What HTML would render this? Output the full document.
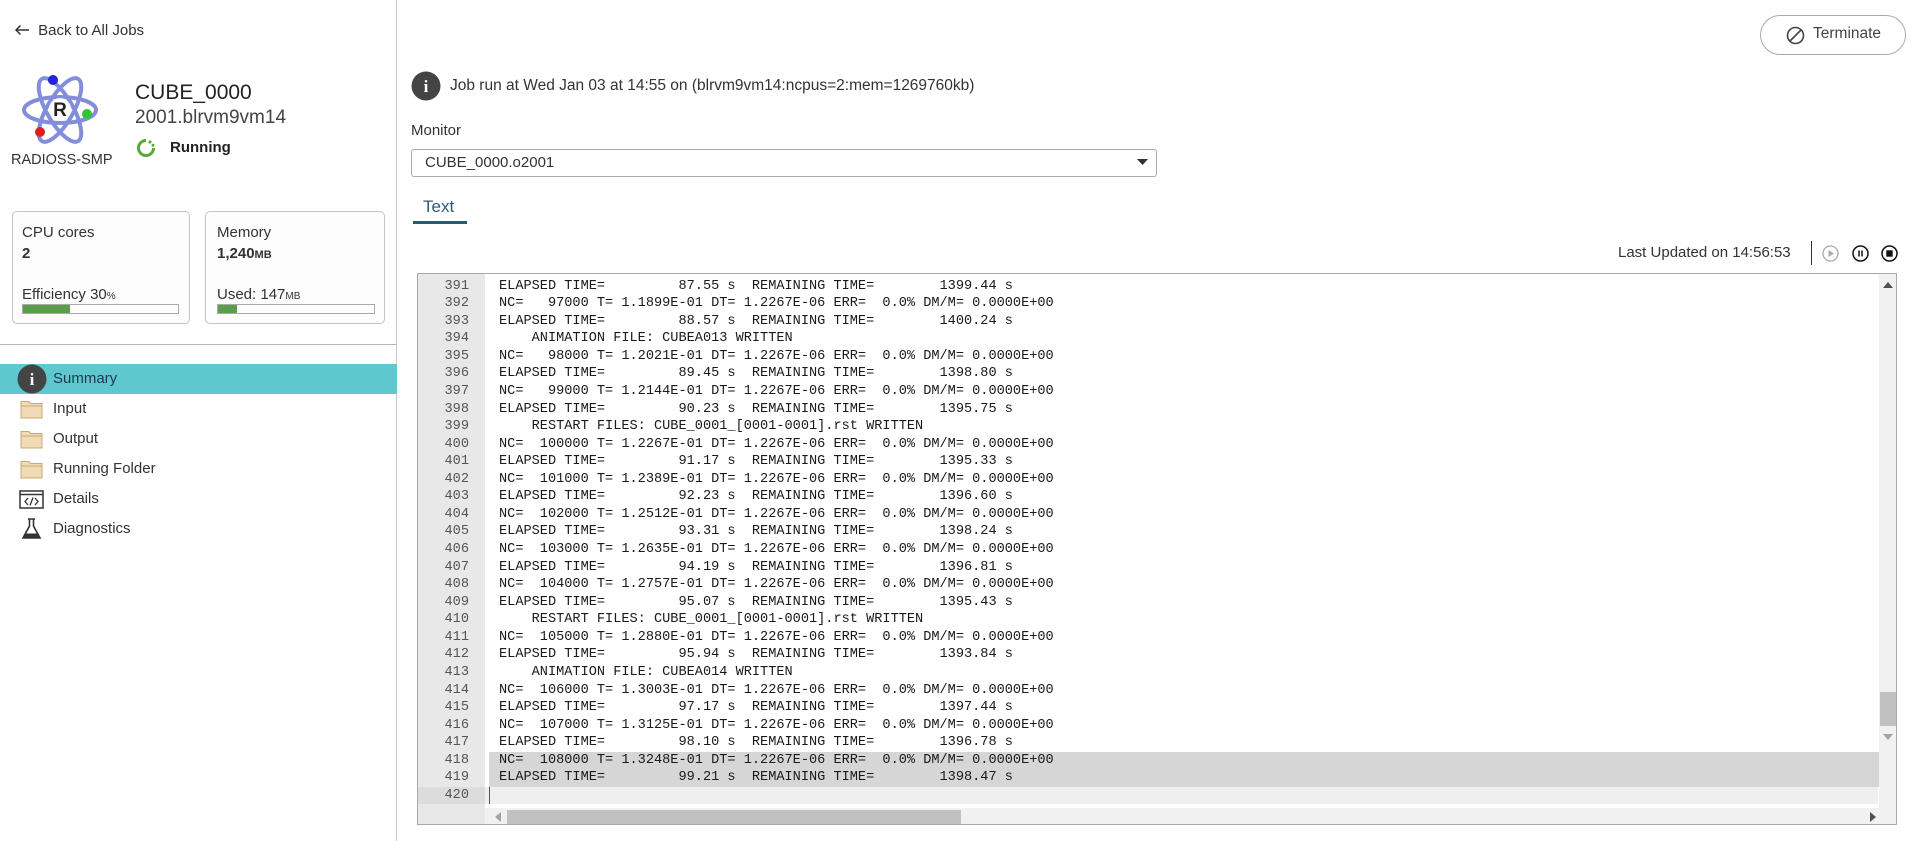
<!DOCTYPE html>
<html><head><meta charset="utf-8">
<style>
*{margin:0;padding:0;box-sizing:border-box}
body{width:1912px;height:841px;overflow:hidden;background:#fff;font-family:"Liberation Sans",sans-serif;color:#333;position:relative}
.a{position:absolute;white-space:nowrap}
.side{position:absolute;left:0;top:0;width:397px;height:841px;border-right:1px solid #c8c8c8}
.card{position:absolute;top:211px;height:113px;border:1px solid #c4c4c4;border-radius:5px;background:#fdfdfd}
.bar{position:absolute;height:10px;border:1px solid #aaa;background:#fff}
.bar i{display:block;height:100%;background:#5a9e4b}
.nav{position:absolute;left:0;width:397px;height:30px;font-size:15px;line-height:30px}
.nav span{position:absolute;left:53px}
.ed{position:absolute;left:417px;top:273px;width:1480px;height:552px;border:1px solid #a9a9a9;overflow:hidden;background:#fff}
.gut{position:absolute;left:0;top:0;width:67px;height:100%;background:#e8e8e8}
.code{position:absolute;left:0;top:-14px;font-family:"Liberation Mono",monospace;font-size:13.6px;color:#1a1a1a}
.ln{height:17.57px;line-height:17.57px;position:relative;white-space:pre}
.ln b{font-weight:normal;position:absolute;left:0;width:51px;text-align:right;color:#555}
.ln span{position:absolute;left:81px}
.hl{background:#d6d6d6}
</style></head><body>
<div class="side">
  <div class="a" style="left:14px;top:22px;font-size:15px;color:#333">
    <svg width="16" height="12" viewBox="0 0 16 12" style="vertical-align:-1px"><path d="M15 6H2M6.5 1.5L2 6l4.5 4.5" stroke="#333" stroke-width="1.5" fill="none"/></svg>
    <span style="margin-left:4px">Back to All Jobs</span></div>
  <svg class="a" style="left:20px;top:74px" width="80" height="72" viewBox="0 0 80 72">
    <g fill="none" stroke="#6d7bd6" stroke-width="4" opacity=".85">
      <ellipse cx="40" cy="36" rx="36" ry="13"/>
      <ellipse cx="40" cy="36" rx="36" ry="13" transform="rotate(60 40 36)"/>
      <ellipse cx="40" cy="36" rx="36" ry="13" transform="rotate(-60 40 36)"/>
    </g>
    <circle cx="40" cy="35" r="11" fill="#fff" opacity=".9"/>
    <text x="40" y="42" text-anchor="middle" font-family="Liberation Sans" font-weight="bold" font-size="19" fill="#222">R</text>
    <circle cx="33" cy="6" r="5" fill="#2323d8"/>
    <circle cx="67" cy="40" r="5" fill="#2fc62f"/>
    <circle cx="20" cy="58" r="5" fill="#e02020"/>
  </svg>
  <div class="a" style="left:11px;top:152px;font-size:14.5px;color:#333">RADIOSS-SMP</div>
  <div class="a" style="left:135px;top:81px;font-size:21px;color:#222">CUBE_0000</div>
  <div class="a" style="left:135px;top:107px;font-size:19px;color:#444">2001.blrvm9vm14</div>
  <svg class="a" style="left:136px;top:138px" width="20" height="20" viewBox="0 0 20 20"><path d="M10 2.5A7.5 7.5 0 1 0 17.5 10" stroke="#5aa83c" stroke-width="3" fill="none"/><path d="M13 3.2l2 1.6" stroke="#5aa83c" stroke-width="3"/><circle cx="17" cy="7.3" r="1.5" fill="#5aa83c"/></svg>
  <div class="a" style="left:170px;top:139px;font-size:15px;font-weight:bold;color:#222">Running</div>

  <div class="card" style="left:12px;width:178px">
    <div class="a" style="left:9px;top:12px;font-size:15px">CPU cores</div>
    <div class="a" style="left:9px;top:33px;font-size:15px;font-weight:bold">2</div>
    <div class="a" style="left:9px;top:74px;font-size:15px">Efficiency 30<small style="font-size:10px">%</small></div>
    <div class="bar" style="left:9px;top:92px;width:157px"><i style="width:30%"></i></div>
  </div>
  <div class="card" style="left:205px;width:180px">
    <div class="a" style="left:11px;top:12px;font-size:15px">Memory</div>
    <div class="a" style="left:11px;top:33px;font-size:15px;font-weight:bold">1,240<small style="font-size:11px">MB</small></div>
    <div class="a" style="left:11px;top:74px;font-size:15px">Used: 147<small style="font-size:10px">MB</small></div>
    <div class="bar" style="left:11px;top:92px;width:158px"><i style="width:12%"></i></div>
  </div>
  <div class="a" style="left:0;top:344px;width:397px;height:1px;background:#b5b5b5"></div>

  <div class="nav" style="top:364px;background:#5fc8cf"><svg class="a" style="left:17px;top:0" width="30" height="30"><circle cx="15" cy="15" r="14.5" fill="#444"/><text x="15" y="21" text-anchor="middle" font-family="Liberation Serif" font-weight="bold" font-size="17" fill="#fff">i</text></svg><span style="color:#1e3a50">Summary</span></div>
  <div class="nav" style="top:394px"><svg class="a" style="left:20px;top:6px" width="23" height="19"><path d="M1 3V1.5h8l1.5 2H22V18H1z" fill="#efdcb4" stroke="#c9a878"/><path d="M1 6h21" stroke="#c9a878"/></svg><span>Input</span></div>
  <div class="nav" style="top:424px"><svg class="a" style="left:20px;top:6px" width="23" height="19"><path d="M1 3V1.5h8l1.5 2H22V18H1z" fill="#efdcb4" stroke="#c9a878"/><path d="M1 6h21" stroke="#c9a878"/></svg><span>Output</span></div>
  <div class="nav" style="top:454px"><svg class="a" style="left:20px;top:6px" width="23" height="19"><path d="M1 3V1.5h8l1.5 2H22V18H1z" fill="#efdcb4" stroke="#c9a878"/><path d="M1 6h21" stroke="#c9a878"/></svg><span>Running Folder</span></div>
  <div class="nav" style="top:484px"><svg class="a" style="left:19px;top:6px" width="25" height="19"><rect x="1" y="1" width="23" height="17" fill="#fff" stroke="#333" stroke-width="1.5"/><path d="M1 4.5h23" stroke="#333" stroke-width="1.5"/><path d="M9 8l-3 3.5 3 3.5M16 8l3 3.5-3 3.5M14 7.5l-3 8" stroke="#333" stroke-width="1.3" fill="none"/></svg><span>Details</span></div>
  <div class="nav" style="top:514px"><svg class="a" style="left:21px;top:4px" width="21" height="22"><path d="M7 1h7M8.5 1v7L2 20h17L12.5 8V1" fill="none" stroke="#333" stroke-width="1.6"/><path d="M4.5 15.5h12L19 20H2z" fill="#333"/></svg><span>Diagnostics</span></div>
</div>

<div class="a" style="left:1760px;top:15px;width:146px;height:40px;border:1px solid #aaa;border-radius:20px"></div>
<svg class="a" style="left:1786px;top:26px" width="19" height="19"><circle cx="9.5" cy="9.5" r="8" fill="none" stroke="#444" stroke-width="1.6"/><path d="M4 15L15 4" stroke="#444" stroke-width="1.6"/></svg>
<div class="a" style="left:1813px;top:25px;font-size:15.5px;color:#444">Terminate</div>

<svg class="a" style="left:411px;top:71px" width="30" height="30"><circle cx="15" cy="15" r="14.5" fill="#444"/><text x="15" y="21" text-anchor="middle" font-family="Liberation Serif" font-weight="bold" font-size="17" fill="#fff">i</text></svg>
<div class="a" style="left:450px;top:77px;font-size:15.5px;color:#333">Job run at Wed Jan 03 at 14:55 on (blrvm9vm14:ncpus=2:mem=1269760kb)</div>
<div class="a" style="left:411px;top:122px;font-size:15px;color:#333">Monitor</div>
<div class="a" style="left:411px;top:149px;width:746px;height:28px;border:1px solid #aaa;border-radius:3px"></div>
<div class="a" style="left:425px;top:154px;font-size:15px;color:#333">CUBE_0000.o2001</div>
<svg class="a" style="left:1137px;top:159px" width="11" height="7"><path d="M0 0h11L5.5 6z" fill="#333"/></svg>
<div class="a" style="left:423px;top:197px;font-size:17px;color:#2b5a78">Text</div>
<div class="a" style="left:413px;top:221px;width:54px;height:3px;background:#2b5a78"></div>

<div class="a" style="left:1618px;top:244px;font-size:15px;color:#333">Last Updated on 14:56:53</div>
<div class="a" style="left:1811px;top:241px;width:1px;height:24px;background:#333"></div>
<svg class="a" style="left:1822px;top:245px" width="17" height="17"><circle cx="8.5" cy="8.5" r="7.5" fill="none" stroke="#aaa" stroke-width="1.3"/><path d="M6.5 5v7l5.5-3.5z" fill="#aaa"/></svg>
<svg class="a" style="left:1852px;top:245px" width="17" height="17"><circle cx="8.5" cy="8.5" r="7.5" fill="none" stroke="#111" stroke-width="1.5"/><path d="M7 5.5v6M10 5.5v6" stroke="#111" stroke-width="1.5"/></svg>
<svg class="a" style="left:1881px;top:245px" width="17" height="17"><circle cx="8.5" cy="8.5" r="7.5" fill="none" stroke="#111" stroke-width="1.5"/><rect x="5.3" y="5.3" width="6.4" height="6.4" fill="#111"/></svg>

<div class="ed">
  <div class="gut"></div>
  <div class="code">
<div class="ln"><b>390</b><span>NC=   96000 T= 1.1777E-01 DT= 1.2267E-06 ERR=  0.0% DM/M= 0.0000E+00</span></div>
<div class="ln"><b>391</b><span>ELAPSED TIME=         87.55 s  REMAINING TIME=        1399.44 s</span></div>
<div class="ln"><b>392</b><span>NC=   97000 T= 1.1899E-01 DT= 1.2267E-06 ERR=  0.0% DM/M= 0.0000E+00</span></div>
<div class="ln"><b>393</b><span>ELAPSED TIME=         88.57 s  REMAINING TIME=        1400.24 s</span></div>
<div class="ln"><b>394</b><span>    ANIMATION FILE: CUBEA013 WRITTEN</span></div>
<div class="ln"><b>395</b><span>NC=   98000 T= 1.2021E-01 DT= 1.2267E-06 ERR=  0.0% DM/M= 0.0000E+00</span></div>
<div class="ln"><b>396</b><span>ELAPSED TIME=         89.45 s  REMAINING TIME=        1398.80 s</span></div>
<div class="ln"><b>397</b><span>NC=   99000 T= 1.2144E-01 DT= 1.2267E-06 ERR=  0.0% DM/M= 0.0000E+00</span></div>
<div class="ln"><b>398</b><span>ELAPSED TIME=         90.23 s  REMAINING TIME=        1395.75 s</span></div>
<div class="ln"><b>399</b><span>    RESTART FILES: CUBE_0001_[0001-0001].rst WRITTEN</span></div>
<div class="ln"><b>400</b><span>NC=  100000 T= 1.2267E-01 DT= 1.2267E-06 ERR=  0.0% DM/M= 0.0000E+00</span></div>
<div class="ln"><b>401</b><span>ELAPSED TIME=         91.17 s  REMAINING TIME=        1395.33 s</span></div>
<div class="ln"><b>402</b><span>NC=  101000 T= 1.2389E-01 DT= 1.2267E-06 ERR=  0.0% DM/M= 0.0000E+00</span></div>
<div class="ln"><b>403</b><span>ELAPSED TIME=         92.23 s  REMAINING TIME=        1396.60 s</span></div>
<div class="ln"><b>404</b><span>NC=  102000 T= 1.2512E-01 DT= 1.2267E-06 ERR=  0.0% DM/M= 0.0000E+00</span></div>
<div class="ln"><b>405</b><span>ELAPSED TIME=         93.31 s  REMAINING TIME=        1398.24 s</span></div>
<div class="ln"><b>406</b><span>NC=  103000 T= 1.2635E-01 DT= 1.2267E-06 ERR=  0.0% DM/M= 0.0000E+00</span></div>
<div class="ln"><b>407</b><span>ELAPSED TIME=         94.19 s  REMAINING TIME=        1396.81 s</span></div>
<div class="ln"><b>408</b><span>NC=  104000 T= 1.2757E-01 DT= 1.2267E-06 ERR=  0.0% DM/M= 0.0000E+00</span></div>
<div class="ln"><b>409</b><span>ELAPSED TIME=         95.07 s  REMAINING TIME=        1395.43 s</span></div>
<div class="ln"><b>410</b><span>    RESTART FILES: CUBE_0001_[0001-0001].rst WRITTEN</span></div>
<div class="ln"><b>411</b><span>NC=  105000 T= 1.2880E-01 DT= 1.2267E-06 ERR=  0.0% DM/M= 0.0000E+00</span></div>
<div class="ln"><b>412</b><span>ELAPSED TIME=         95.94 s  REMAINING TIME=        1393.84 s</span></div>
<div class="ln"><b>413</b><span>    ANIMATION FILE: CUBEA014 WRITTEN</span></div>
<div class="ln"><b>414</b><span>NC=  106000 T= 1.3003E-01 DT= 1.2267E-06 ERR=  0.0% DM/M= 0.0000E+00</span></div>
<div class="ln"><b>415</b><span>ELAPSED TIME=         97.17 s  REMAINING TIME=        1397.44 s</span></div>
<div class="ln"><b>416</b><span>NC=  107000 T= 1.3125E-01 DT= 1.2267E-06 ERR=  0.0% DM/M= 0.0000E+00</span></div>
<div class="ln"><b>417</b><span>ELAPSED TIME=         98.10 s  REMAINING TIME=        1396.78 s</span></div>
<div class="ln"><b>418</b><span class="hl" style="left:71px;padding-left:10px;width:1390px">NC=  108000 T= 1.3248E-01 DT= 1.2267E-06 ERR=  0.0% DM/M= 0.0000E+00</span></div>
<div class="ln"><b>419</b><span class="hl" style="left:71px;padding-left:10px;width:1390px">ELAPSED TIME=         99.21 s  REMAINING TIME=        1398.47 s</span></div>
<div class="ln" style="background:#efefef;width:1460px"><b style="background:#dcdcdc;width:67px;padding-right:16px">420</b><span style="left:71px;width:1px;height:17px;background:#555;top:0"></span></div>
  </div>
  <div class="a" style="left:1461px;top:0;width:18px;height:534px;background:#f1f1f1"></div>
  <svg class="a" style="left:1465px;top:8px" width="10" height="6"><path d="M0 6h10L5 0z" fill="#505050"/></svg>
  <div class="a" style="left:1462px;top:418px;width:16px;height:34px;background:#c1c1c1"></div>
  <svg class="a" style="left:1465px;top:460px" width="10" height="6"><path d="M0 0h10L5 6z" fill="#a3a3a3"/></svg>
  <div class="a" style="left:67px;top:534px;width:1413px;height:18px;background:#f1f1f1"></div>
  <div class="a" style="left:89px;top:536px;width:454px;height:14px;background:#c1c1c1"></div>
  <svg class="a" style="left:77px;top:538px" width="6" height="10"><path d="M6 0v10L0 5z" fill="#a3a3a3"/></svg>
  <svg class="a" style="left:1452px;top:538px" width="6" height="10"><path d="M0 0v10L6 5z" fill="#505050"/></svg>
</div>
</body></html>
